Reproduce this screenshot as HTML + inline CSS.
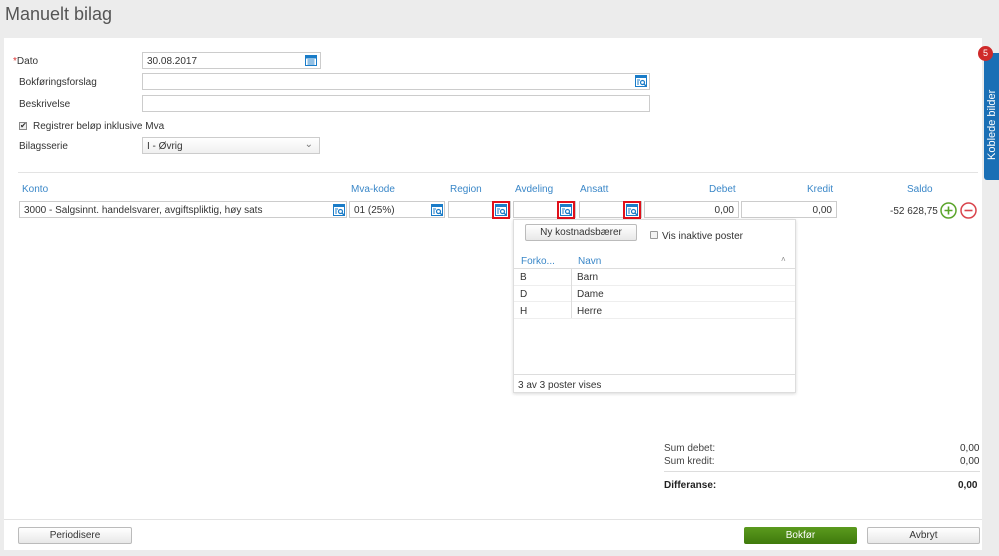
<!DOCTYPE html>
<html><head><meta charset="utf-8"><style>
*{box-sizing:border-box;margin:0;padding:0}
body{width:999px;height:556px;background:#ececec;font-family:"Liberation Sans",sans-serif;font-size:10px;color:#333;position:relative;overflow:hidden}
.a{position:absolute}
.panel{left:4px;top:38px;width:978px;height:512px;background:#fff}
.inp{position:absolute;height:17px;border:1px solid #ccc;background:#fff;padding:3px 4px 0;font-size:10px;line-height:11px;white-space:nowrap;overflow:hidden}
.lbl{position:absolute;font-size:10px}
.hd{position:absolute;color:#3a87c8;font-size:10px}
.ic{position:absolute;width:12px;height:12px}
.red{position:absolute;width:18px;height:18px;border:2px solid #e0101a}
.btn{position:absolute;height:17px;border:1px solid #bbb;border-radius:2px;background:linear-gradient(#fff,#e8e8e8);text-align:center;font-size:10px;line-height:16px}
</style></head><body>
<svg width="0" height="0" style="position:absolute"><defs><symbol id="lk" viewBox="0 0 12 12"><rect x="0.5" y="0.5" width="11" height="11" fill="#fff" stroke="#1a7cc8"/><rect x="0.5" y="0.5" width="11" height="2.5" fill="#1a7cc8"/><path d="M2 5h3M2 7h2M2 9h2" stroke="#1a7cc8"/><circle cx="7.5" cy="7.5" r="2" fill="none" stroke="#1a7cc8" stroke-width="1.2"/><path d="M9 9l2 2" stroke="#1a7cc8" stroke-width="1.3"/></symbol></defs></svg>
<div class="a" style="left:5px;top:4px;font-size:18px;color:#555">Manuelt bilag</div>
<div class="a panel"></div>

<div class="lbl" style="left:13px;top:56px"><span style="color:#d33">*</span>Dato</div>
<div class="inp" style="left:142px;top:52px;width:179px">30.08.2017</div>
<svg class="ic" style="left:305px;top:54px" viewBox="0 0 12 12"><rect x="0.5" y="1.5" width="11" height="10" fill="#fff" stroke="#1a7cc8"/><rect x="0.5" y="1.5" width="11" height="3" fill="#1a7cc8"/><path d="M2 6h8M2 8h8M2 10h8M4 5v6M6 5v6M8 5v6" stroke="#1a7cc8" stroke-width=".6"/></svg>
<div class="lbl" style="left:19px;top:77px">Bokføringsforslag</div>
<div class="inp" style="left:142px;top:73px;width:508px"></div>
<svg class="ic" style="left:635px;top:75px"><use href="#lk"/></svg>
<div class="lbl" style="left:19px;top:99px">Beskrivelse</div>
<div class="inp" style="left:142px;top:95px;width:508px"></div>
<div class="a" style="left:19px;top:122px;width:8px;height:8px;border:1px solid #888;background:#eee;font-size:8px;line-height:6px;text-align:center">✔</div>
<div class="lbl" style="left:33px;top:121px">Registrer beløp inklusive Mva</div>
<div class="lbl" style="left:19px;top:141px">Bilagsserie</div>
<div class="inp" style="left:142px;top:137px;width:178px;background:linear-gradient(#fff,#f0f0f0)">I - Øvrig<span style="position:absolute;right:6px;top:1px;color:#777">⌄</span></div>
<div class="a" style="left:18px;top:172px;width:960px;height:1px;background:#e3e3e3"></div>

<div class="hd" style="left:22px;top:184px">Konto</div>
<div class="hd" style="left:351px;top:184px">Mva-kode</div>
<div class="hd" style="left:450px;top:184px">Region</div>
<div class="hd" style="left:515px;top:184px">Avdeling</div>
<div class="hd" style="left:580px;top:184px">Ansatt</div>
<div class="hd" style="left:709px;top:184px">Debet</div>
<div class="hd" style="left:807px;top:184px">Kredit</div>
<div class="hd" style="left:907px;top:184px">Saldo</div>

<div class="inp" style="left:19px;top:201px;width:328px">3000 - Salgsinnt. handelsvarer, avgiftspliktig, høy sats</div>
<svg class="ic" style="left:333px;top:204px"><use href="#lk"/></svg>
<div class="inp" style="left:349px;top:201px;width:96px">01 (25%)</div>
<svg class="ic" style="left:431px;top:204px"><use href="#lk"/></svg>
<div class="inp" style="left:448px;top:201px;width:63px"></div>
<div class="inp" style="left:513px;top:201px;width:63px"></div>
<div class="inp" style="left:579px;top:201px;width:63px"></div>
<div class="red" style="left:492px;top:201px"></div><svg class="ic" style="left:495px;top:204px"><use href="#lk"/></svg>
<div class="red" style="left:557px;top:201px"></div><svg class="ic" style="left:560px;top:204px"><use href="#lk"/></svg>
<div class="red" style="left:623px;top:201px"></div><svg class="ic" style="left:626px;top:204px"><use href="#lk"/></svg>
<div class="inp" style="left:644px;top:201px;width:95px;text-align:right">0,00</div>
<div class="inp" style="left:741px;top:201px;width:96px;text-align:right">0,00</div>
<div class="lbl" style="left:890px;top:206px">-52 628,75</div>
<svg class="a" style="left:940px;top:202px" width="17" height="17" viewBox="0 0 17 17"><circle cx="8.5" cy="8.5" r="7.5" fill="none" stroke="#5aa42a" stroke-width="1.5"/><path d="M8.5 4.5v8M4.5 8.5h8" stroke="#5aa42a" stroke-width="1.6"/></svg>
<svg class="a" style="left:960px;top:202px" width="17" height="17" viewBox="0 0 17 17"><circle cx="8.5" cy="8.5" r="7.5" fill="none" stroke="#d9434b" stroke-width="1.5"/><path d="M4.5 8.5h8" stroke="#d9434b" stroke-width="1.6"/></svg>

<div class="a" style="left:513px;top:219px;width:283px;height:174px;background:#fff;border:1px solid #ddd;box-shadow:0 1px 3px rgba(0,0,0,.15)"></div>
<div class="btn" style="left:525px;top:224px;width:112px">Ny kostnadsbærer</div>
<div class="a" style="left:650px;top:231px;width:8px;height:8px;border:1px solid #999;border-radius:1px;background:#f3f3f3"></div>
<div class="lbl" style="left:662px;top:231px">Vis inaktive poster</div>
<div class="hd" style="left:521px;top:256px">Forko...</div>
<div class="hd" style="left:578px;top:256px">Navn</div>
<div class="lbl" style="left:781px;top:255px;color:#888;font-size:8px">˄</div>
<div class="a" style="left:514px;top:268px;width:281px;height:1px;background:#ddd"></div>
<div class="a" style="left:514px;top:285px;width:281px;height:1px;background:#eee"></div>
<div class="a" style="left:514px;top:301px;width:281px;height:1px;background:#eee"></div>
<div class="a" style="left:514px;top:318px;width:281px;height:1px;background:#eee"></div>
<div class="a" style="left:571px;top:269px;width:1px;height:49px;background:#ddd"></div>
<div class="lbl" style="left:520px;top:272px">B</div><div class="lbl" style="left:577px;top:272px">Barn</div>
<div class="lbl" style="left:520px;top:289px">D</div><div class="lbl" style="left:577px;top:289px">Dame</div>
<div class="lbl" style="left:520px;top:306px">H</div><div class="lbl" style="left:577px;top:306px">Herre</div>
<div class="a" style="left:514px;top:374px;width:281px;height:1px;background:#ddd"></div>
<div class="lbl" style="left:518px;top:380px">3 av 3 poster vises</div>

<div class="lbl" style="left:664px;top:443px;color:#444">Sum debet:</div><div class="lbl" style="left:960px;top:443px">0,00</div>
<div class="lbl" style="left:664px;top:456px;color:#444">Sum kredit:</div><div class="lbl" style="left:960px;top:456px">0,00</div>
<div class="a" style="left:664px;top:471px;width:316px;height:1px;background:#ddd"></div>
<div class="lbl" style="left:664px;top:480px;color:#222;font-weight:bold">Differanse:</div><div class="lbl" style="left:958px;top:480px;color:#222;font-weight:bold">0,00</div>

<div class="a" style="left:4px;top:519px;width:978px;height:1px;background:#e3e3e3"></div>
<div class="btn" style="left:18px;top:527px;width:114px">Periodisere</div>
<div class="a" style="left:744px;top:527px;width:113px;height:17px;border-radius:2px;background:linear-gradient(#5b9a1e,#3f7a0c);color:#fff;text-align:center;line-height:17px">Bokfør</div>
<div class="btn" style="left:867px;top:527px;width:113px">Avbryt</div>

<div class="a" style="left:984px;top:53px;width:15px;height:127px;background:#1a6fb5;border-radius:3px 0 0 3px"></div>
<div class="a" style="left:985px;top:56px;width:14px;height:124px;color:#fff;font-size:11px;writing-mode:vertical-rl;transform:rotate(180deg);text-align:left;line-height:14px;white-space:nowrap;padding-top:20px">Koblede bilder</div>
<div class="a" style="left:978px;top:46px;width:15px;height:15px;border-radius:50%;background:#cf2a2a;color:#fff;font-size:9px;text-align:center;line-height:15px">5</div>
</body></html>
